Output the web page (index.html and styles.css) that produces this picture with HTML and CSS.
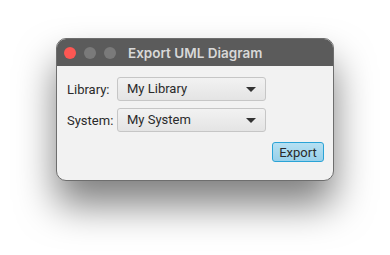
FILE: index.html
```html
<!DOCTYPE html>
<html lang="en">
<head>
<meta charset="UTF-8">
<meta name="viewport" content="width=device-width, initial-scale=1.0">
<title>Export UML Diagram</title>
<link rel="stylesheet" href="styles.css">
</head>
<body>
<div class="window">
    <!-- タイトルバー -->
    <div class="titlebar">
        <span class="light close"></span>
        <span class="light"></span>
        <span class="light"></span>
        <div class="title">Export UML Diagram</div>
    </div>
    <div class="content">
        <div class="form">
            <label>Library:</label>
            <div class="combo">My Library<span class="arrow"></span></div>
            <label>System:</label>
            <div class="combo">My System<span class="arrow"></span></div>
        </div>
        <div class="actions">
            <button class="export">Export</button>
        </div>
    </div>
</div>
</body>
</html>
```

FILE: styles.css
```css
html {
    background: #fff;
}
body {
    font-family: Roboto, "Liberation Sans", sans-serif;
    margin: 0;
    padding: 38px 0 0 56px;
    min-height: 255px;
    box-sizing: border-box;
    background: #fff;
}
.window {
    width: 278px;
    height: 143px;
    box-sizing: border-box;
    border: 1px solid #6e6e6e;
    border-radius: 10px;
    overflow: hidden;
    background: #f2f2f2;
    box-shadow: 0 24px 38px rgba(0, 0, 0, 0.5);
}
.titlebar {
    display: flex;
    align-items: center;
    height: 27px;
    padding-left: 7px;
    background: #5b5b5b;
    gap: 8px;
}
.light {
    width: 12px;
    height: 12px;
    border-radius: 50%;
    background: #7a7a7a;
}
.light.close {
    background: #fc5753;
}
.title {
    margin-left: 4px;
    color: #d8d8d8;
    font-family: Inter, sans-serif;
    font-weight: 600;
    font-size: 13.5px;
}
.content {
    padding: 11px 9px 0 10px;
}
.form {
    display: grid;
    grid-template-columns: 44px 149px;
    justify-content: start;
    column-gap: 6px;
    row-gap: 7px;
    align-items: center;
}
label {
    font-size: 13px;
    color: #2a2a2a;
    white-space: nowrap;
}
.combo {
    position: relative;
    height: 24px;
    box-sizing: border-box;
    padding-left: 9px;
    line-height: 22px;
    font-size: 13px;
    color: #2a2a2a;
    border: 1px solid #c6c6c6;
    border-radius: 3px;
    background: linear-gradient(#f2f2f2, #e4e4e4);
}
.arrow {
    position: absolute;
    right: 9px;
    top: 9px;
    border-left: 5px solid transparent;
    border-right: 5px solid transparent;
    border-top: 5px solid #333;
}
.actions {
    display: flex;
    justify-content: flex-end;
    margin-top: 10px;
}
.export {
    width: 52px;
    height: 20px;
    padding: 0;
    font-family: inherit;
    font-size: 13px;
    color: #2a2a2a;
    border: 1px solid #2aa3d6;
    border-radius: 3px;
    background: linear-gradient(#b6e0f2, #97d0ea);
}
```
